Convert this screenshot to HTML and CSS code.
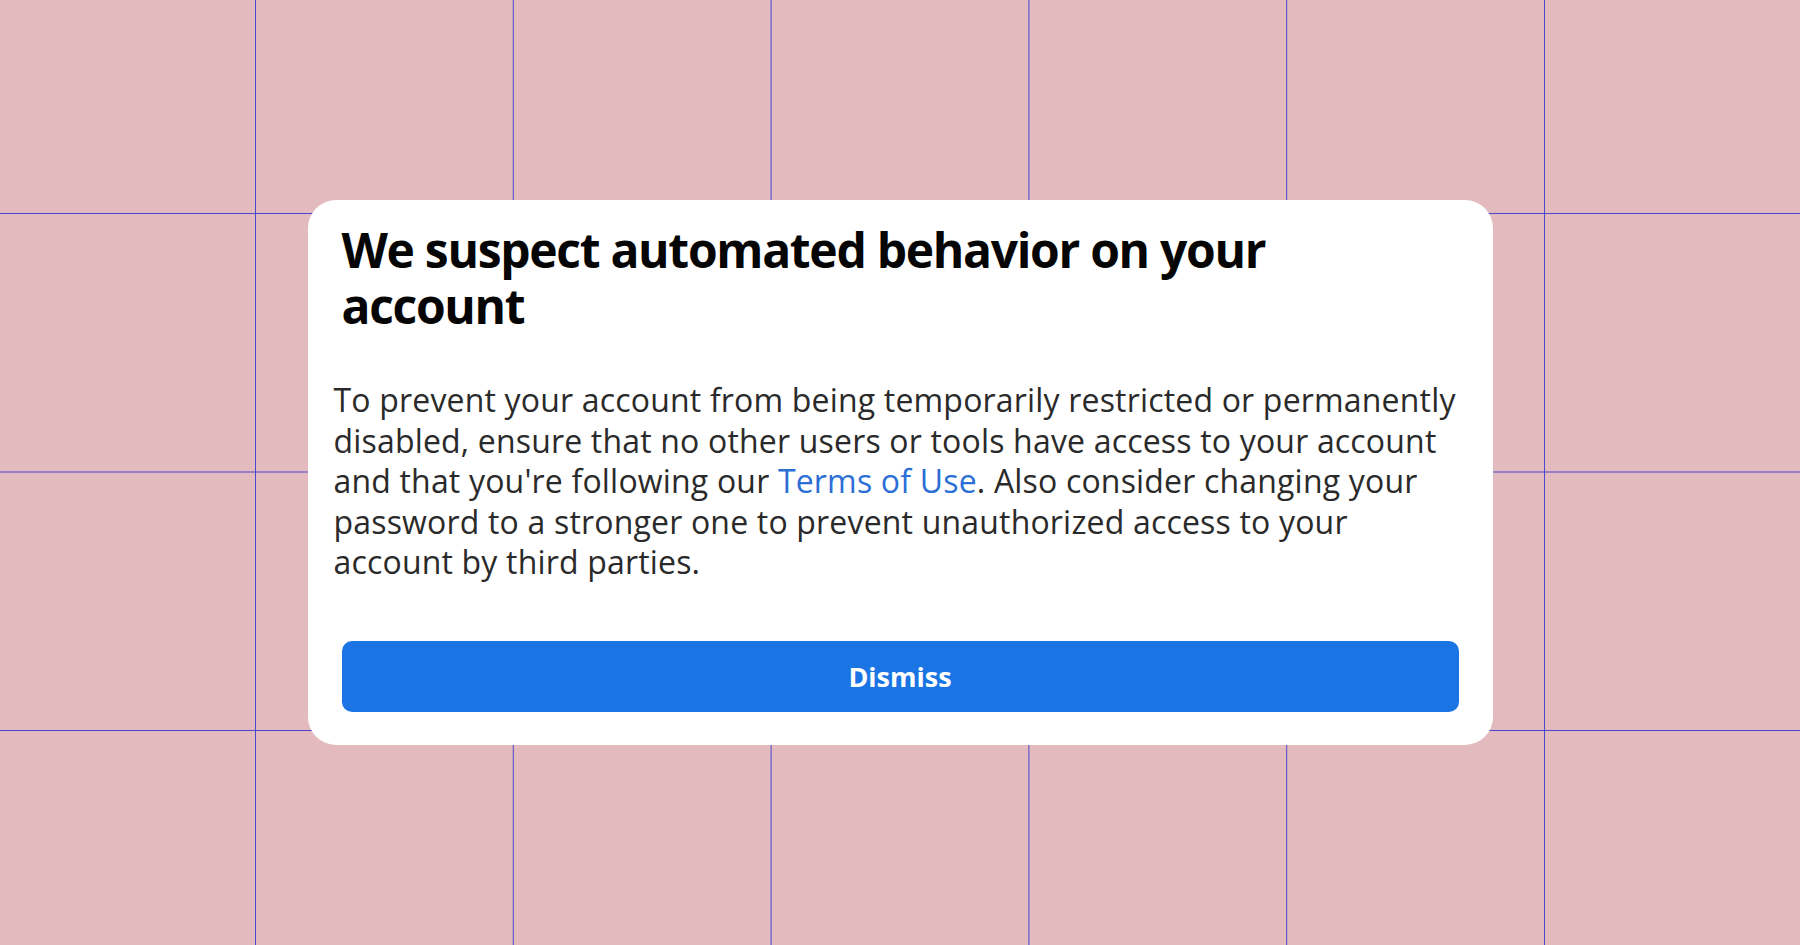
FILE: index.html
```html
<!DOCTYPE html>
<html lang="en">
<head>
    <meta charset="UTF-8">
    <meta name="viewport" content="width=device-width, initial-scale=1.0">
    <title>Automated behavior notice</title>
    <link rel="stylesheet" href="styles.css">
</head>
<body>
    <!-- Notice dialog -->
    <div class="dialog">
        <h1 class="dialog-title">We suspect automated behavior on your<br>account</h1>
        <p class="dialog-text">
            To prevent your account from being temporarily restricted or permanently<br>
            disabled, ensure that no other users or tools have access to your account<br>
            and that you're following our <a href="#" class="terms-link">Terms of Use</a>. Also consider changing your<br>
            password to a stronger one to prevent unauthorized access to your<br>
            account by third parties.
        </p>
        <button type="button" class="dismiss-btn">Dismiss</button>
    </div>
</body>
</html>
```

FILE: styles.css
```css
/* CSS */
body {
    font-family: 'Open Sans', 'Noto Sans', sans-serif;
    margin: 0;
    padding: 0;
    height: 100vh;
    display: flex;
    justify-content: center;
    align-items: center;
    background-color: #e3bbbe;
    /* grid lines behind the dialog */
    background-image:
        linear-gradient(to right, #4a46cf 0, #4a46cf 1px, transparent 1px),
        linear-gradient(to bottom, #4a46cf 0, #4a46cf 1px, transparent 1px);
    background-size: 257.8px 100%, 100% 258.5px;
    background-position: 255px 0, 0 213px;
}

.dialog {
    background: #fff;
    width: 1185px;
    box-sizing: border-box;
    padding: 22px 26px 33px;
    border-radius: 28px;
}

.dialog-title {
    margin: 0 8px;
    font-size: 48px;
    line-height: 56px;
    font-weight: 700;
    color: #050505;
    letter-spacing: -1.3px;
}

.dialog-text {
    margin: 46.5px 0 0;
    font-size: 32px;
    line-height: 40.4px;
    color: #2a2a2a;
    letter-spacing: 0.18px;
}

.terms-link {
    color: #2b6fd6;
    text-decoration: none;
}

.dismiss-btn {
    display: block;
    width: calc(100% - 16px);
    margin: 58.5px 8px 0;
    height: 71px;
    border: none;
    border-radius: 10px;
    background-color: #1b74e4;
    color: #fff;
    font-family: inherit;
    font-size: 27px;
    font-weight: 700;
    cursor: pointer;
}
```
